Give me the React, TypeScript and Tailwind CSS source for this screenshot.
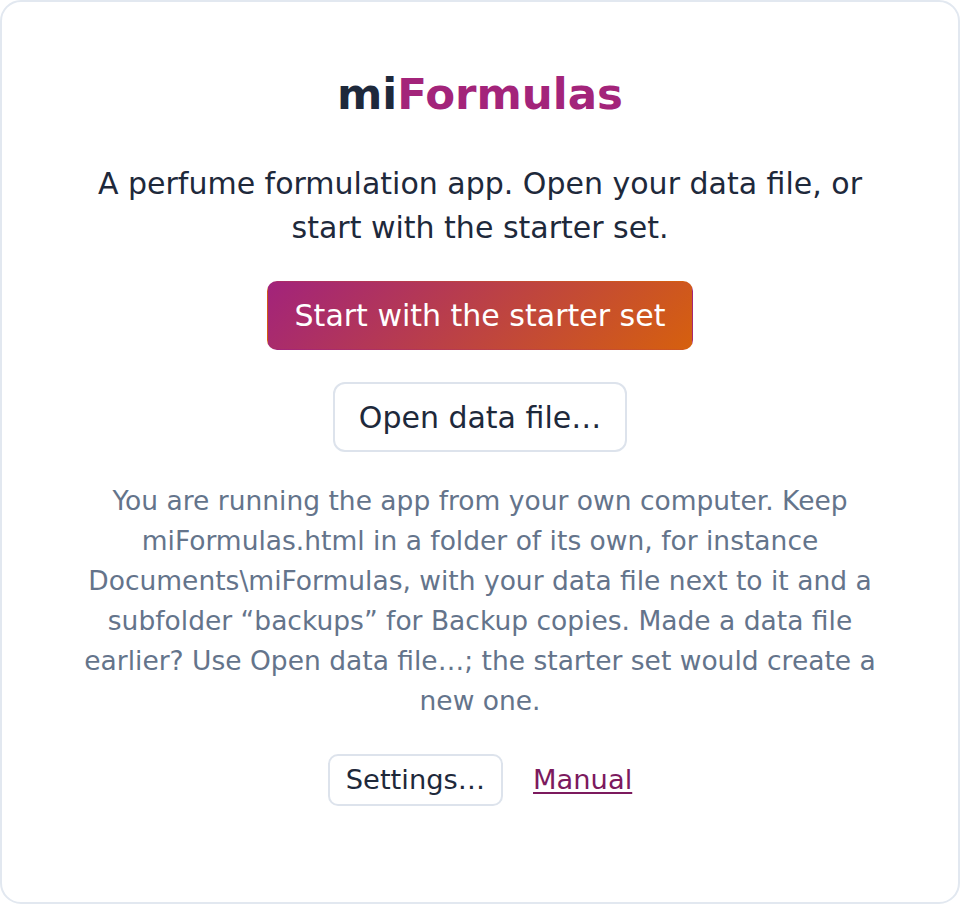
export default function App() {
  return (
    <div
      className="box-border flex h-[904px] w-full flex-col items-center rounded-[21px] border-2 border-[#e2e8f0] bg-white px-[78px] pt-[66px] text-center"
      style={{ fontFamily: '"DejaVu Sans", Verdana, sans-serif' }}
    >
      <h1 className="text-[43.5px] leading-[53px] font-bold text-[#1e293b]">
        mi<span className="text-[#a3247a]">Formulas</span>
      </h1>

      <p className="mt-[41px] text-[30px] leading-[44px] text-[#1e293b]">
        A perfume formulation app. Open your data file, or start with the
        starter set.
      </p>

      <button
        type="button"
        className="mt-[31px] flex h-[69px] items-center rounded-[10px] border border-transparent bg-[linear-gradient(135deg,#a2237b,#d6600e)] px-[27px] text-[30px] leading-[37px] text-white"
      >
        Start with the starter set
      </button>

      <button
        type="button"
        className="mt-[32px] flex h-[70px] items-center rounded-[12px] border-2 border-[#dde3ec] bg-white px-[24px] text-[30px] leading-[37px] text-[#1e293b]"
      >
        Open data file…
      </button>

      <p className="mt-[29px] text-[26.5px] leading-[40px] text-[#64748b]">
        You are running the app from your own computer. Keep miFormulas.html in
        a folder of its own, for instance Documents\miFormulas, with your data
        file next to it and a subfolder “backups” for Backup copies. Made a
        data file earlier? Use Open data file…; the starter set would create a
        new one.
      </p>

      <div className="mt-[33px] flex items-center gap-[30px]">
        <button
          type="button"
          className="flex h-[52px] items-center rounded-[10px] border-2 border-[#dde3ec] bg-white px-[16px] text-[27.3px] leading-[34px] text-[#1e293b]"
        >
          Settings…
        </button>
        <a
          href="#"
          className="text-[27.3px] leading-[34px] text-[#7c1a5e] underline underline-offset-[3px]"
        >
          Manual
        </a>
      </div>
    </div>
  );
}
